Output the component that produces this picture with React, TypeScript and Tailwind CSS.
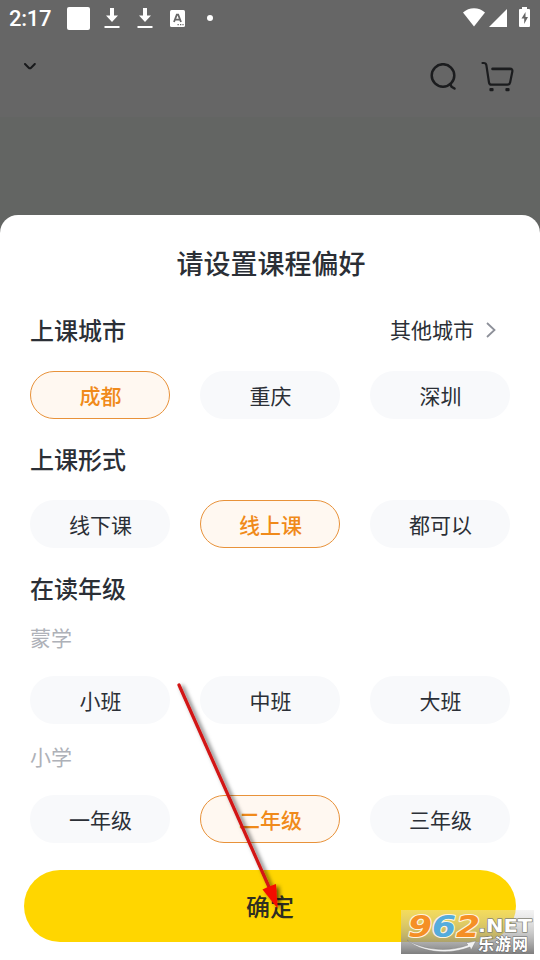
import React from 'react';

interface ChipProps {
  label: string;
  active?: boolean;
}

const Chip: React.FC<ChipProps> = ({ label, active }) => (
  <button
    className={
      active
        ? 'h-12 rounded-full border border-[#e8923a] bg-[#fff8f1] pl-px text-[21px] leading-[46px] font-medium text-[#f08a1a]'
        : 'h-12 rounded-full bg-[#f8f9fb] pl-px text-[21px] leading-[48px] text-[#2b2f36]'
    }
  >
    {label}
  </button>
);

interface ChipRowProps {
  items: string[];
  selected?: string;
}

const ChipRow: React.FC<ChipRowProps> = ({ items, selected }) => (
  <div className="grid grid-cols-3 gap-[30px]">
    {items.map((item) => (
      <Chip key={item} label={item} active={item === selected} />
    ))}
  </div>
);

const SectionTitle: React.FC<{ children: React.ReactNode }> = ({ children }) => (
  <h2 className="text-2xl leading-9 font-medium text-[#2b2f36]">{children}</h2>
);

const DownloadIcon = () => (
  <svg width="16" height="22" viewBox="0 0 16 22" fill="#fff">
    <path d="M6 1h4v7.500h4l-6 6.500-6-6.500h4z" />
    <path d="M.5 19h15v2H.5z" />
  </svg>
);

const StatusBar = () => (
  <div className="flex h-9 items-center pl-[9px] pr-[10px] text-white">
    <span className="w-[58px] pt-px font-[Roboto] text-[22px] leading-9 font-medium tracking-[-0.3px]">2:17</span>
    <span className="size-[23px] rounded-[2px] bg-white" />
    <span className="ml-[14px]"><DownloadIcon /></span>
    <span className="ml-[17px]"><DownloadIcon /></span>
    <svg className="ml-[17px]" width="15" height="17" viewBox="0 0 15 17">
      <rect width="15" height="17" rx="1.5" fill="#fff" />
      <path d="M4 12 6.8 4.700h1.400L11 12M5.200 9.600h4.600" fill="none" stroke="#666" strokeWidth="1.800" />
      <path d="M7.500 14h1.300v1.300H7.500zM10 14h1.300v1.300H10zM12.400 14h1.200v1.300h-1.200z" fill="#666" />
    </svg>
    <span className="ml-[22px] size-[6px] rounded-full bg-white" />
    <svg className="ml-auto" width="68" height="22" viewBox="0 0 68 22" fill="#fff">
      <path d="M1 5.500C7-.3 17-.3 23 5.500L12 19.500z" />
      <path d="M45 2v18H27z" />
      <path d="M60 0h5v2h2a1 1 0 0 1 1 1v16a1 1 0 0 1-1 1h-9a1 1 0 0 1-1-1V3a1 1 0 0 1 1-1h2z" />
      <path d="m63.500 5-4 6.500h2.700V17l3.800-7h-2.500V5z" fill="#666" />
    </svg>
  </div>
);

const TopBar = () => (
  <div className="flex h-[82px] items-start border-b border-[#636563] pl-6 pr-6 pt-[24px]">
    <svg className="mt-[3px]" width="12" height="7" viewBox="0 0 12 7" fill="none" stroke="#18191b" strokeWidth="2" strokeLinecap="round">
      <path d="m1 1 3.700 3.700a1.700 1.700 0 0 0 2.400 0L10.800 1" />
    </svg>
    <svg className="ml-auto mt-[3px]" width="28" height="28" viewBox="0 0 28 28" fill="none" stroke="#1b1c1e" strokeWidth="2.500" strokeLinecap="round">
      <circle cx="13" cy="12.500" r="11.300" />
      <path d="m20.300 21 1.200 2.700 3 1.800" />
    </svg>
    <svg className="ml-[23px] mr-px mt-[1px]" width="34" height="32" viewBox="0 0 34 32" fill="none" stroke="#1b1c1e" strokeWidth="2.200" strokeLinecap="round" strokeLinejoin="round">
      <path d="M1.500 2h1.200q2.300 0 2.700 2.300L8 21.500q.3 2.200 2.400 2.200h16q2.300 0 2.700-2.200l2.200-10.800q.6-3-2.400-3H11.500" />
      <path d="M11.500 8.200h18" />
      <path d="M9.500 28h2v1.200h-2zM25.500 28h2v1.200h-2z" />
    </svg>
  </div>
);

const Pointer = () => (
  <svg className="absolute left-[170px] top-[676px]" width="125" height="240" viewBox="0 0 125 240">
    <defs>
      <filter id="pointer-shadow" x="-20%" y="-10%" width="150%" height="120%">
        <feDropShadow dx="3" dy="2" stdDeviation="2" floodColor="#000" floodOpacity="0.600" />
      </filter>
    </defs>
    <g filter="url(#pointer-shadow)">
      <path d="M9 9 99 211" stroke="#d21414" strokeWidth="3.200" strokeLinecap="round" />
      <path d="m92.500 213.500 6.500-3 7-2.500 1.700 24.500z" fill="#f40d06" />
    </g>
  </svg>
);

const Watermark = () => (
  <svg className="absolute left-[401px] top-[910px]" width="133" height="44" viewBox="0 0 133 44">
    <defs>
      <linearGradient id="mark-bg" x1="0" y1="0" x2="0" y2="1">
        <stop offset="0" stopColor="#e4e4e4" stopOpacity="0.400" />
        <stop offset="0.500" stopColor="#aaa" stopOpacity="0.600" />
        <stop offset="1" stopColor="#707070" stopOpacity="0.900" />
      </linearGradient>
    </defs>
    <rect width="133" height="44" fill="url(#mark-bg)" />
    <path d="M6 30c18 11 43 12 61 5l-2-2 10-2-5 9-1-3C49 45 21 43 6 30" fill="#f2f2f2" stroke="#777" strokeWidth="0.400" />
    <g fontFamily="DejaVu Sans, sans-serif" fontWeight="700" paintOrder="stroke" strokeLinejoin="round">
      <g fontSize="31" fontStyle="italic" stroke="#fff4e0" strokeWidth="2.200">
        <text x="7" y="27" fill="#f58f25" textLength="24" lengthAdjust="spacingAndGlyphs">9</text>
        <text x="31" y="27" fill="#55acdc" textLength="24" lengthAdjust="spacingAndGlyphs">6</text>
        <text x="55" y="27" fill="#f58f25" textLength="24" lengthAdjust="spacingAndGlyphs">2</text>
      </g>
      <g fontSize="17" fill="#fff" stroke="#858575" strokeWidth="1.300">
        <text x="77" y="21.500" textLength="54" lengthAdjust="spacingAndGlyphs">.NET</text>
      </g>
    </g>
    <text x="77" y="40" fontFamily="Noto Sans CJK SC, sans-serif" fontWeight="700" fontSize="16" fill="#fff" stroke="#666" strokeWidth="1" paintOrder="stroke" textLength="50">乐游网</text>
  </svg>
);

export default function App() {
  return (
    <div className="relative flex h-[960px] w-[540px] flex-col overflow-hidden bg-[#636563] font-['Noto_Sans_CJK_SC',sans-serif]">
      <div className="h-[118px] shrink-0 bg-[#666]">
        <StatusBar />
        <TopBar />
      </div>

      <main className="mt-[97px] flex grow flex-col rounded-t-[18px] bg-white px-[30px] pt-[28px]">
        <h1 className="pl-0.5 text-center text-[27px] leading-10 font-medium text-[#2b2f36]">请设置课程偏好</h1>

        <div className="mt-[29px] mb-[23px] flex h-9 items-center justify-between">
          <SectionTitle>上课城市</SectionTitle>
          <button className="mr-[14px] flex items-center gap-3 pb-0.5 text-[21px] leading-[34px] text-[#2b2f36]">
            其他城市
            <svg className="mt-0.5" width="10" height="16" viewBox="0 0 10 16" fill="none" stroke="#8d9099" strokeWidth="1.800">
              <path d="m1 1 7.500 7L1 15" />
            </svg>
          </button>
        </div>
        <ChipRow items={['成都', '重庆', '深圳']} selected="成都" />

        <div className="mt-[22px] mb-[23px]"><SectionTitle>上课形式</SectionTitle></div>
        <ChipRow items={['线下课', '线上课', '都可以']} selected="线上课" />

        <div className="mt-[22px]"><SectionTitle>在读年级</SectionTitle></div>
        <p className="mt-[15px] mb-[23px] text-[21px] leading-8 text-[#aeb1b8]">蒙学</p>
        <ChipRow items={['小班', '中班', '大班']} />
        <p className="mt-[16px] mb-[23px] text-[21px] leading-8 text-[#aeb1b8]">小学</p>
        <ChipRow items={['一年级', '二年级', '三年级']} selected="二年级" />

        <button className="-mx-1.5 mt-[27px] h-[72px] shrink-0 rounded-full bg-[#ffd600] pb-px text-2xl font-medium text-[#2f2e22]">
          确定
        </button>
      </main>

      <Pointer />
      <Watermark />
    </div>
  );
}
